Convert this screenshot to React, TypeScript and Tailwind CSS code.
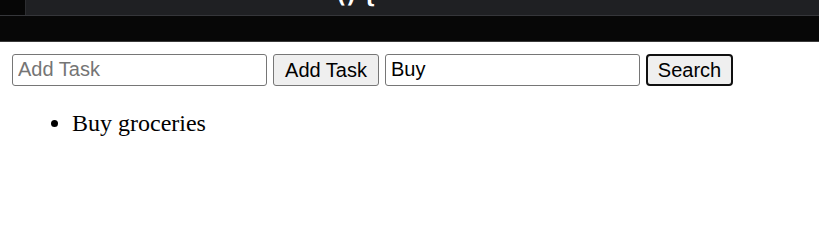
export default function App() {
  return (
    <div className="w-[819px] h-[233px] bg-white overflow-hidden">
      <div className="flex h-[16px] border-b border-[#35363a]">
        <div className="w-[26px] h-full bg-[#060606] border-r border-[#2c2d30]" />
        <div className="flex-1 h-full bg-[#1f2023] overflow-hidden">
          <div className="ml-[311px] -mt-[13px] text-white font-bold text-[20px] leading-[18px] font-['DejaVu_Sans',sans-serif] whitespace-pre">
            {"() {"}
          </div>
        </div>
      </div>
      <div className="h-[26px] bg-[#070707] border-b border-[#3a3a3a]" />
      <div className="p-[12px]">
        <div className="flex items-center gap-[6px] font-['Liberation_Sans',Arial,sans-serif] text-[20px]">
          <input
            className="w-[255px] h-[32px] border border-[#767676] rounded-[3px] px-[5px] pb-[1px] text-black placeholder:text-[#757575] outline-none"
            placeholder="Add Task"
          />
          <button className="w-[106px] h-[32px] bg-[#efefef] border border-[#767676] rounded-[3px] text-black leading-none">
            Add Task
          </button>
          <input
            className="w-[255px] h-[32px] border border-[#767676] rounded-[3px] px-[5px] pb-[1px] text-black outline-none"
            defaultValue="Buy"
          />
          <button className="w-[87px] h-[32px] bg-[#efefef] border-2 border-[#101010] rounded-[4px] text-black leading-none">
            Search
          </button>
        </div>
        <ul className="mt-[19px] pl-[60px] list-disc font-['Liberation_Serif','Times_New_Roman',serif] text-[24px] text-black">
          <li>Buy groceries</li>
        </ul>
      </div>
    </div>
  );
}
